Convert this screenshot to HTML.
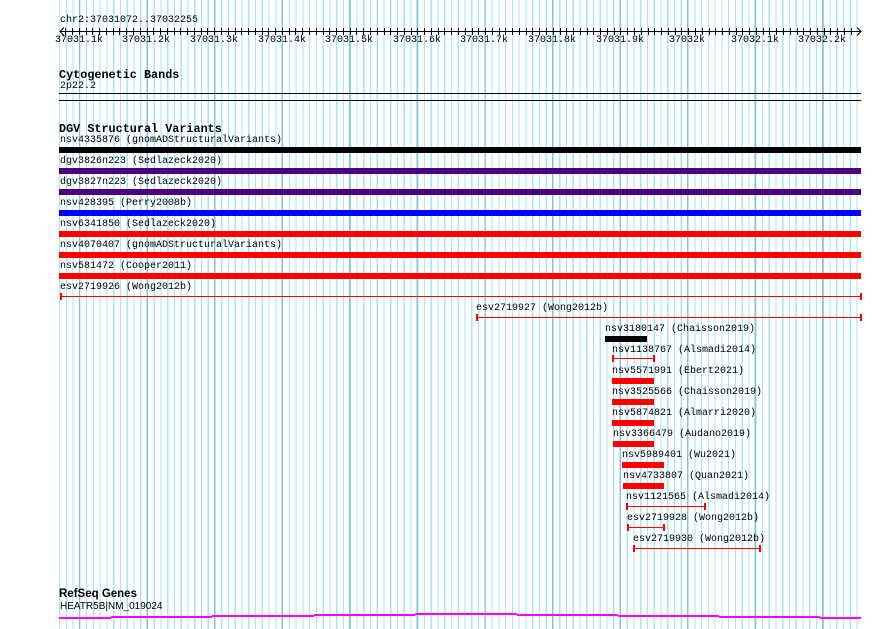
<!DOCTYPE html>
<html><head><meta charset="utf-8"><style>
*{margin:0;padding:0}
body{width:890px;height:629px;background:#fff;position:relative;overflow:hidden;font-family:"Liberation Mono",monospace;font-size:10px;color:#000}
.g{position:absolute;left:59px;top:0;width:799px;height:629px;
background:
repeating-linear-gradient(90deg,transparent 0,transparent 19.8px,#7cc4e6 19.8px,#7cc4e6 21.2px,transparent 21.2px,transparent 67.58px),
repeating-linear-gradient(90deg,#a6e6ee 0,#a6e6ee 1.2px,transparent 1.2px,transparent 6.758px);}
.t{position:absolute;white-space:pre;line-height:11px}
.h{font-weight:bold;font-size:11.8px}
.b{position:absolute;height:6px}
.l{position:absolute;height:1px;background:#f00}
.l:before,.l:after{content:"";position:absolute;top:-3px;width:2px;height:7px;background:#f00}
.l:before{left:0}.l:after{right:0}
.m{position:absolute;height:2px;background:#f0f}
</style></head><body>
<div class="g"></div>
<div class="t" style="left:60px;top:15px">chr2:37031072..37032255</div>
<div style="position:absolute;left:60px;top:31px;width:801px;height:1px;background:#000"></div>
<svg style="position:absolute;left:0;top:0" width="890" height="40">
<g stroke="#000" stroke-width="1" fill="none">
<path d="M64 27.5L60 31.5L64 35.5M857 27.5L861 31.5L857 35.5"/>
<path d="M65.5 28v7M72.5 28v7M79.5 28v7M86.5 28v7M92.5 28v7M99.5 28v7M106.5 28v7M113.5 28v7M119.5 28v7M126.5 28v7M133.5 28v7M140.5 28v7M147.5 28v7M153.5 28v7M160.5 28v7M167.5 28v7M174.5 28v7M180.5 28v7M187.5 28v7M194.5 28v7M201.5 28v7M207.5 28v7M214.5 28v7M221.5 28v7M228.5 28v7M235.5 28v7M241.5 28v7M248.5 28v7M255.5 28v7M262.5 28v7M268.5 28v7M275.5 28v7M282.5 28v7M289.5 28v7M295.5 28v7M302.5 28v7M309.5 28v7M316.5 28v7M323.5 28v7M329.5 28v7M336.5 28v7M343.5 28v7M350.5 28v7M356.5 28v7M363.5 28v7M370.5 28v7M377.5 28v7M384.5 28v7M390.5 28v7M397.5 28v7M404.5 28v7M411.5 28v7M417.5 28v7M424.5 28v7M431.5 28v7M438.5 28v7M444.5 28v7M451.5 28v7M458.5 28v7M465.5 28v7M472.5 28v7M478.5 28v7M485.5 28v7M492.5 28v7M499.5 28v7M505.5 28v7M512.5 28v7M519.5 28v7M526.5 28v7M532.5 28v7M539.5 28v7M546.5 28v7M553.5 28v7M560.5 28v7M566.5 28v7M573.5 28v7M580.5 28v7M587.5 28v7M593.5 28v7M600.5 28v7M607.5 28v7M614.5 28v7M620.5 28v7M627.5 28v7M634.5 28v7M641.5 28v7M648.5 28v7M654.5 28v7M661.5 28v7M668.5 28v7M675.5 28v7M681.5 28v7M688.5 28v7M695.5 28v7M702.5 28v7M709.5 28v7M715.5 28v7M722.5 28v7M729.5 28v7M736.5 28v7M742.5 28v7M749.5 28v7M756.5 28v7M763.5 28v7M769.5 28v7M776.5 28v7M783.5 28v7M790.5 28v7M797.5 28v7M803.5 28v7M810.5 28v7M817.5 28v7M824.5 28v7M830.5 28v7M837.5 28v7M844.5 28v7M851.5 28v7"/>
</g></svg>
<div class="t" style="left:55px;top:35px">37031.1k</div>
<div class="t" style="left:122px;top:35px">37031.2k</div>
<div class="t" style="left:190px;top:35px">37031.3k</div>
<div class="t" style="left:258px;top:35px">37031.4k</div>
<div class="t" style="left:325px;top:35px">37031.5k</div>
<div class="t" style="left:393px;top:35px">37031.6k</div>
<div class="t" style="left:460px;top:35px">37031.7k</div>
<div class="t" style="left:528px;top:35px">37031.8k</div>
<div class="t" style="left:596px;top:35px">37031.9k</div>
<div class="t" style="left:669px;top:35px">37032k</div>
<div class="t" style="left:731px;top:35px">37032.1k</div>
<div class="t" style="left:798px;top:35px">37032.2k</div>

<div class="t h" style="left:59px;top:70px">Cytogenetic Bands</div>
<div class="t" style="left:60px;top:81px">2p22.2</div>
<div style="position:absolute;left:59px;top:93px;width:802px;height:1px;background:#000"></div>
<div style="position:absolute;left:59px;top:100px;width:802px;height:1px;background:#000"></div>

<div class="t h" style="left:59px;top:124px">DGV Structural Variants</div>
<div class="t" style="left:60px;top:135px">nsv4335876 (gnomADStructuralVariants)</div>
<div class="b" style="left:59px;top:147px;width:802px;background:#000"></div>
<div class="t" style="left:60px;top:156px">dgv3826n223 (Sedlazeck2020)</div>
<div class="b" style="left:59px;top:168px;width:802px;background:#4b0082"></div>
<div class="t" style="left:60px;top:177px">dgv3827n223 (Sedlazeck2020)</div>
<div class="b" style="left:59px;top:189px;width:802px;background:#4b0082"></div>
<div class="t" style="left:60px;top:198px">nsv428395 (Perry2008b)</div>
<div class="b" style="left:59px;top:210px;width:802px;background:#00f"></div>
<div class="t" style="left:60px;top:219px">nsv6341850 (Sedlazeck2020)</div>
<div class="b" style="left:59px;top:231px;width:802px;background:#f00"></div>
<div class="t" style="left:60px;top:240px">nsv4070407 (gnomADStructuralVariants)</div>
<div class="b" style="left:59px;top:252px;width:802px;background:#f00"></div>
<div class="t" style="left:60px;top:261px">nsv581472 (Cooper2011)</div>
<div class="b" style="left:59px;top:273px;width:802px;background:#f00"></div>
<div class="t" style="left:60px;top:282px">esv2719926 (Wong2012b)</div>
<div class="l" style="left:60px;top:296px;width:802px"></div>
<div class="t" style="left:476px;top:303px">esv2719927 (Wong2012b)</div>
<div class="l" style="left:476px;top:317px;width:386px"></div>
<div class="t" style="left:605px;top:324px">nsv3180147 (Chaisson2019)</div>
<div class="b" style="left:605px;top:336px;width:42px;background:#000"></div>
<div class="t" style="left:612px;top:345px">nsv1138767 (Alsmadi2014)</div>
<div class="l" style="left:612px;top:358px;width:43px"></div>
<div class="t" style="left:612px;top:366px">nsv5571991 (Ebert2021)</div>
<div class="b" style="left:612px;top:378px;width:42px;background:#f00"></div>
<div class="t" style="left:612px;top:387px">nsv3525566 (Chaisson2019)</div>
<div class="b" style="left:612px;top:399px;width:42px;background:#f00"></div>
<div class="t" style="left:612px;top:408px">nsv5874821 (Almarri2020)</div>
<div class="b" style="left:612px;top:420px;width:42px;background:#f00"></div>
<div class="t" style="left:613px;top:429px">nsv3366479 (Audano2019)</div>
<div class="b" style="left:613px;top:441px;width:41px;background:#f00"></div>
<div class="t" style="left:622px;top:450px">nsv5989401 (Wu2021)</div>
<div class="b" style="left:622px;top:462px;width:42px;background:#f00"></div>
<div class="t" style="left:623px;top:471px">nsv4733807 (Quan2021)</div>
<div class="b" style="left:623px;top:483px;width:41px;background:#f00"></div>
<div class="t" style="left:626px;top:492px">nsv1121565 (Alsmadi2014)</div>
<div class="l" style="left:626px;top:506px;width:80px"></div>
<div class="t" style="left:627px;top:513px">esv2719928 (Wong2012b)</div>
<div class="l" style="left:627px;top:527px;width:38px"></div>
<div class="t" style="left:633px;top:534px">esv2719930 (Wong2012b)</div>
<div class="l" style="left:633px;top:548px;width:128px"></div>

<div class="t" style="left:59px;top:589px;font-family:'Liberation Sans',sans-serif;font-weight:bold;font-size:11.5px">RefSeq Genes</div>
<div class="t" style="left:60px;top:601px;font-family:'Liberation Sans',sans-serif;font-size:10px">HEATR5B|NM_019024</div>
<div class="m" style="left:59px;top:617px;width:52px"></div>
<div class="m" style="left:111px;top:616px;width:101px"></div>
<div class="m" style="left:212px;top:615px;width:102px"></div>
<div class="m" style="left:314px;top:614px;width:101px"></div>
<div class="m" style="left:415px;top:613px;width:102px"></div>
<div class="m" style="left:517px;top:614px;width:101px"></div>
<div class="m" style="left:618px;top:615px;width:101px"></div>
<div class="m" style="left:719px;top:616px;width:101px"></div>
<div class="m" style="left:820px;top:617px;width:41px"></div>
</body></html>
